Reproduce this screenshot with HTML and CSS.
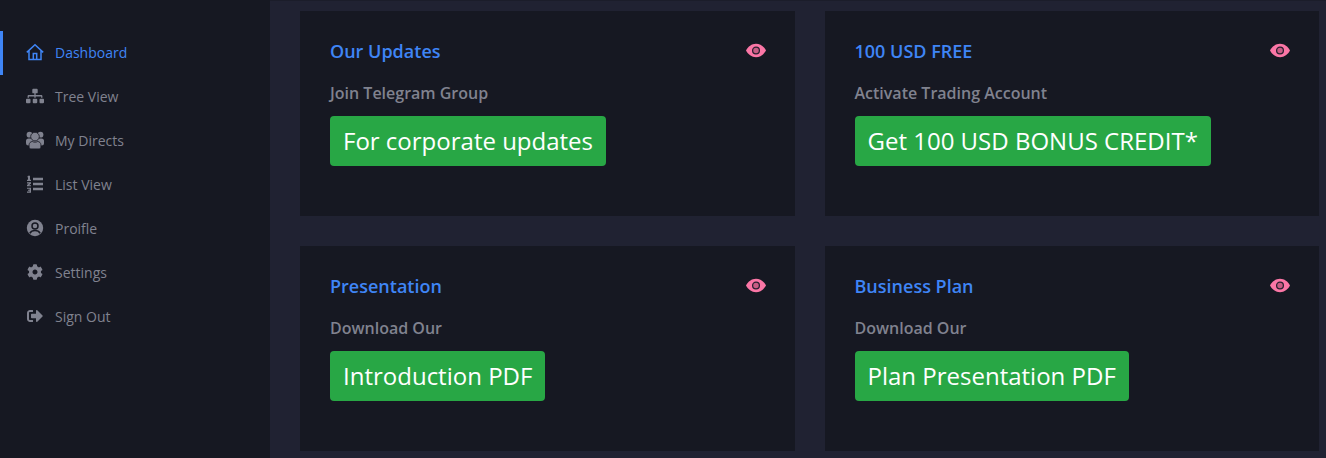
FILE: index.html
```html
<!DOCTYPE html>
<html lang="en">
<head>
<meta charset="utf-8">
<title>Dashboard</title>
<link rel="stylesheet" href="styles.css">
</head>
<body>
<svg class="defs" aria-hidden="true"><symbol id="eye" viewBox="0 0 20 15"><path class="eye-shape" d="M10 .8C5.600.8 2.100 3.600 0 7.500c2.100 3.900 5.600 6.700 10 6.700s7.900-2.800 10-6.700C17.900 3.600 14.400.8 10 .8z"/><circle class="eye-ring" cx="10" cy="7.500" r="3.400"/></symbol></svg>
<div class="app">
  <nav class="sidebar">
    <a class="item active"><svg class="ico" viewBox="0 0 18 18"><path fill="none" stroke="currentColor" stroke-width="1.500" d="M.8 9.400 9 1.700l8.200 7.700M3 7.500V16.500h12V7.500M7.300 16.500V10.500h3.400v6"/></svg><span>Dashboard</span></a>
    <a class="item"><svg class="ico" viewBox="0 0 640 512"><path fill="currentColor" d="M128 352H32c-17.670 0-32 14.330-32 32v96c0 17.670 14.330 32 32 32h96c17.670 0 32-14.330 32-32v-96c0-17.670-14.330-32-32-32zm-24-80h192v48h48v-48h192v48h48v-57.590c0-21.170-17.230-38.410-38.410-38.410H344v-64h40c17.670 0 32-14.330 32-32V32c0-17.670-14.330-32-32-32H256c-17.670 0-32 14.330-32 32v96c0 17.670 14.330 32 32 32h40v64H94.410C73.230 224 56 241.230 56 262.410V320h48v-48zm264 80h-96c-17.670 0-32 14.330-32 32v96c0 17.670 14.330 32 32 32h96c17.670 0 32-14.330 32-32v-96c0-17.670-14.330-32-32-32zm240 0h-96c-17.670 0-32 14.330-32 32v96c0 17.670 14.330 32 32 32h96c17.670 0 32-14.330 32-32v-96c0-17.670-14.330-32-32-32z"/></svg><span>Tree View</span></a>
    <a class="item"><svg class="ico" viewBox="0 0 18 18"><g fill="currentColor"><circle cx="3.500" cy="3.700" r="2.900"/><circle cx="14.500" cy="3.700" r="2.900"/><rect x="0" y="7.500" width="18" height="7" rx="2.500"/><g class="halo"><circle cx="9" cy="5.600" r="4.300"/><path d="M6.300 10.500c1.600.9 3.800.9 5.400 0 1.700.1 3.200 1.500 3.200 3.300v2.300c0 1-.8 1.800-1.800 1.800H4.900c-1 0-1.800-.8-1.800-1.800v-2.300c0-1.800 1.500-3.200 3.200-3.300z"/></g></g></svg><span>My Directs</span></a>
    <a class="item"><svg class="ico" viewBox="0 0 18 18"><path fill="currentColor" d="M7 2.800h10v2.400H7zM7 7.800h10v2.400H7zM7 12.800h10v2.400H7zM2 .8h2v4h1V6H1V4.800h1V2.200H1.200zM1 7.300h4v1.300L3 10.200h2v1.100H1v-1.200l2-1.700H1zM1 12.700h4v5H1v-1.100h2.600v-.9H2v-1h1.600v-.9H1z"/></svg><span>List View</span></a>
    <a class="item"><svg class="ico" viewBox="0 0 18 18"><circle cx="9" cy="9" r="8.200" fill="currentColor"/><circle class="cut" cx="9" cy="7" r="3"/><path class="cut" d="M3.800 14.300c1-1.700 2.700-2.700 5.200-2.700s4.200 1 5.200 2.700"/></svg><span>Proifle</span></a>
    <a class="item"><svg class="ico ico-sm" viewBox="0 0 512 512"><path fill="currentColor" d="M487.400 315.700l-42.600-24.600c4.300-23.200 4.300-47 0-70.200l42.600-24.600c4.900-2.800 7.100-8.600 5.500-14-11.100-35.600-30-67.800-54.700-94.600-3.800-4.100-10-5.100-14.800-2.300L380.800 110c-17.900-15.400-38.500-27.300-60.800-35.100V25.800c0-5.600-3.900-10.500-9.400-11.700-36.700-8.200-74.300-7.800-109.200 0-5.500 1.200-9.400 6.100-9.400 11.700V75c-22.200 7.900-42.800 19.800-60.800 35.100L88.700 85.500c-4.900-2.800-11-1.900-14.800 2.300-24.700 26.700-43.600 58.900-54.700 94.600-1.700 5.400.6 11.200 5.500 14L67.300 221c-4.300 23.200-4.300 47 0 70.200l-42.600 24.600c-4.900 2.800-7.100 8.600-5.500 14 11.100 35.600 30 67.800 54.700 94.600 3.800 4.100 10 5.100 14.800 2.300l42.600-24.600c17.900 15.400 38.500 27.300 60.800 35.100v49.200c0 5.600 3.900 10.500 9.400 11.700 36.700 8.200 74.300 7.800 109.200 0 5.500-1.200 9.400-6.100 9.400-11.700v-49.200c22.200-7.900 42.800-19.800 60.800-35.100l42.600 24.600c4.900 2.800 11 1.900 14.800-2.300 24.700-26.700 43.600-58.900 54.700-94.600 1.500-5.500-.7-11.300-5.600-14.100zM256 336c-44.100 0-80-35.900-80-80s35.900-80 80-80 80 35.900 80 80-35.900 80-80 80z"/></svg><span>Settings</span></a>
    <a class="item"><svg class="ico ico-sm" viewBox="0 0 512 512"><path fill="currentColor" d="M497 273L329 441c-15 15-41 4.500-41-17v-96H152c-13.300 0-24-10.700-24-24v-96c0-13.300 10.700-24 24-24h136V88c0-21.400 25.900-32 41-17l168 168c9.300 9.400 9.300 24.600 0 34zM192 436v-40c0-6.600-5.400-12-12-12H96c-17.700 0-32-14.300-32-32V160c0-17.700 14.300-32 32-32h84c6.600 0 12-5.400 12-12V76c0-6.600-5.400-12-12-12H96c-53 0-96 43-96 96v192c0 53 43 96 96 96h84c6.600 0 12-5.400 12-12z"/></svg><span>Sign Out</span></a>
  </nav>
  <main class="main">
    <section class="card">
      <header class="card-head"><h2>Our Updates</h2><svg class="eye"><use href="#eye"/></svg></header>
      <p class="label">Join Telegram Group</p>
      <a class="btn">For corporate updates</a>
    </section>
    <section class="card">
      <header class="card-head"><h2>100 USD FREE</h2><svg class="eye"><use href="#eye"/></svg></header>
      <p class="label">Activate Trading Account</p>
      <a class="btn">Get 100 USD BONUS CREDIT*</a>
    </section>
    <section class="card">
      <header class="card-head"><h2>Presentation</h2><svg class="eye"><use href="#eye"/></svg></header>
      <p class="label">Download Our</p>
      <a class="btn">Introduction PDF</a>
    </section>
    <section class="card">
      <header class="card-head"><h2>Business Plan</h2><svg class="eye"><use href="#eye"/></svg></header>
      <p class="label">Download Our</p>
      <a class="btn">Plan Presentation PDF</a>
    </section>
  </main>
</div>
</body>
</html>
```
FILE: styles.css
```css
* { box-sizing: border-box; }
html, body { margin: 0; height: 100%; overflow: hidden; }
body { font-family: "Open Sans", "Liberation Sans", sans-serif; background: #202232; }
.defs { width: 0; height: 0; display: block; }
.app { display: flex; height: 458px; }
.sidebar { width: 270px; flex: none; background: #161822; padding-top: 31px; }
.item { display: flex; align-items: center; height: 44px; padding: 0 0 2px 23px; font-size: 14px; color: #80828f; border-left: 3px solid transparent; }
.item.active { color: #3f85f6; border-left-color: #3f85f6; }
.ico { width: 18px; height: 18px; flex: none; margin-right: 11px; }
.ico-sm { width: 16px; height: 16px; margin-left: 1px; margin-right: 12px; }
.cut { fill: none; stroke: #161822; stroke-width: 1.500; }
.halo { stroke: #161822; stroke-width: .8; }
.main { flex: 1; padding: 10px 7px 0 30px; border-top: 1px solid #1b1d2a; display: grid; grid-template-columns: 1fr 1fr; grid-auto-rows: 205px; gap: 30px; }
.card { background: #161822; padding: 29px 30px 30px; }
.card-head { display: flex; justify-content: space-between; align-items: center; height: 22px; }
h2 { margin: 0; font-size: 18px; line-height: 22px; font-weight: 600; color: #3f85f6; }
.eye { width: 20px; height: 15px; margin-right: -1px; margin-top: -2px; }
.eye-shape { fill: #fb76a6; }
.eye-ring { fill: #c85c84; stroke: #2a2030; stroke-width: 1.300; }
.label { margin: 20px 0 0; font-size: 16px; line-height: 22px; font-weight: 600; color: #80828f; }
.btn { display: inline-block; margin-top: 12px; height: 50px; padding: 0 13px; font-size: 24px; line-height: 50px; color: #fff; background: #28a745; border-radius: 4px; }
```
